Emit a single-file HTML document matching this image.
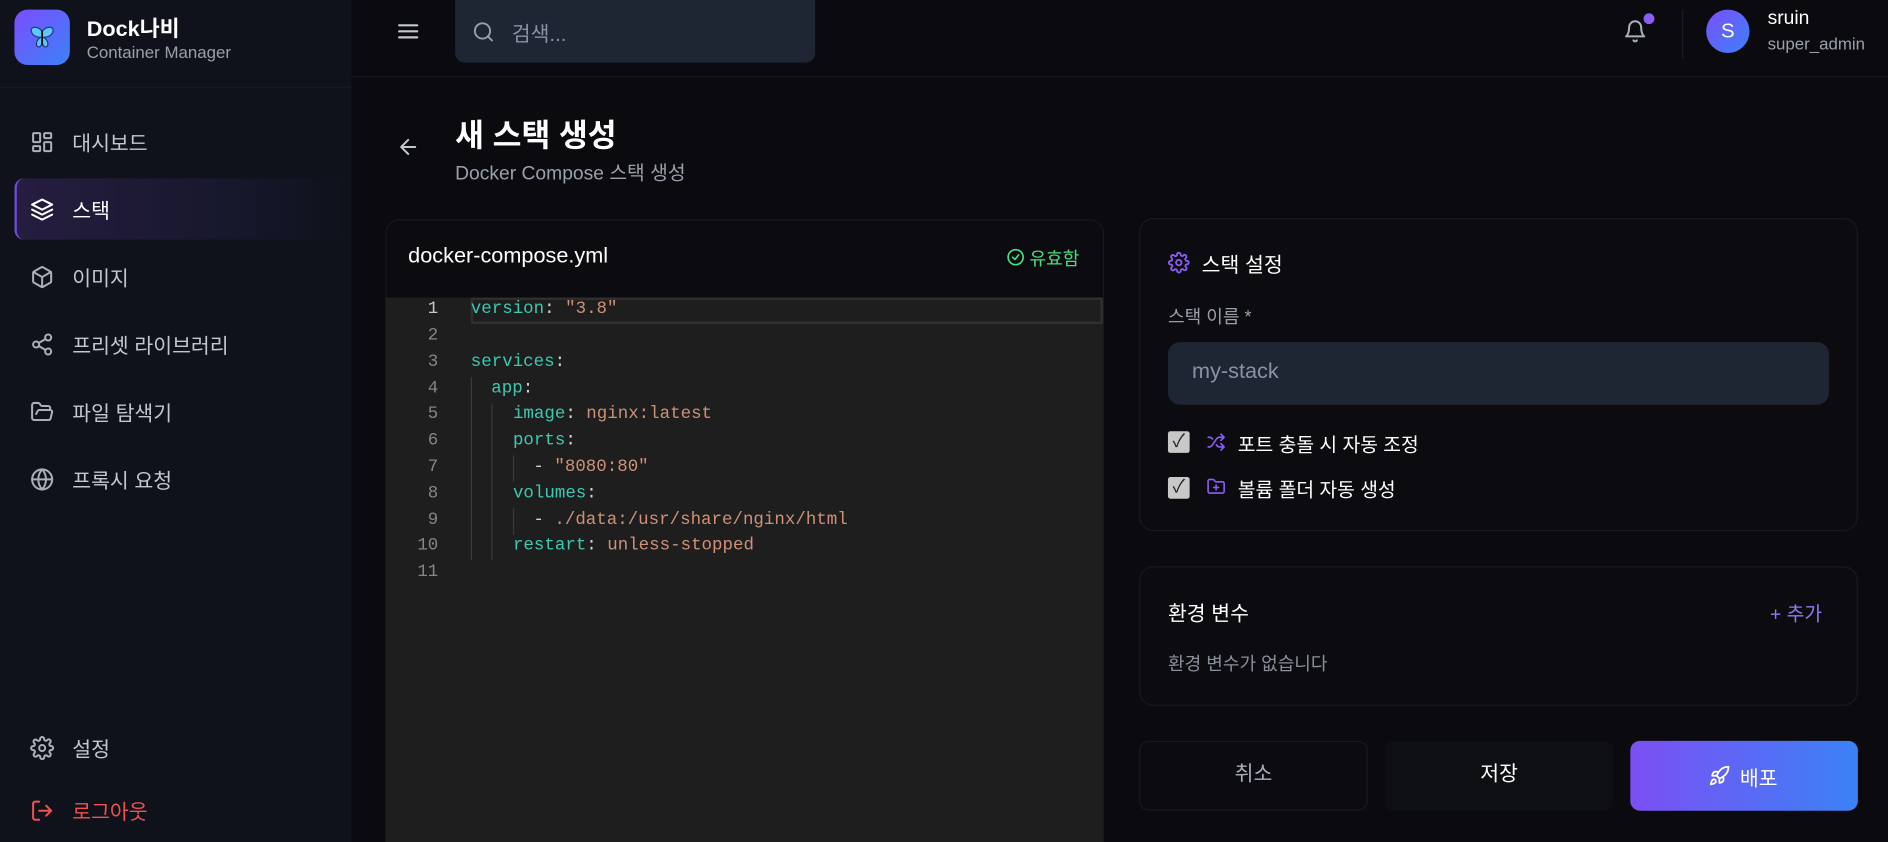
<!DOCTYPE html>
<html><head><meta charset="utf-8"><style>
*{box-sizing:border-box;margin:0;padding:0}
html,body{width:1888px;height:842px;overflow:hidden;background:#0b0b0f}
#o{position:relative;width:1888px;height:842px;overflow:hidden}
#w{position:absolute;left:0;top:0;width:1568px;height:699px;overflow:hidden;transform:scale(1.20408,1.2046);transform-origin:0 0;font-family:"Liberation Sans","Noto Sans CJK KR",sans-serif;color:#fff;background:#0b0b0f}
.a{position:absolute;white-space:nowrap}
svg{position:absolute;fill:none;stroke-linecap:round;stroke-linejoin:round}
.nav{font-size:17px;color:#c3c7cf}
.mono{font-family:"Liberation Mono","DejaVu Sans Mono",monospace;font-size:14.5px;color:#d4d4d4}
.k{color:#3dc9b0}.s{color:#ce9178}
.ln{position:absolute;width:42px;text-align:right;left:322px;font-family:"Liberation Mono",monospace;font-size:14.5px;color:#858585}
.card{position:absolute;border:1px solid #17191f;border-radius:12px;background:#0c0c10}
</style></head><body><div id="o"><div id="w">
<div class="a" style="left:0;top:0;width:292px;height:699px;background:#0f121a"></div>
<div class="a" style="left:0;top:72px;width:292px;height:1px;background:#161a23"></div>
<div class="a" style="left:12px;top:8px;width:46px;height:46px;border-radius:11px;background:linear-gradient(135deg,#7c4dff,#3b82f6)"></div>
<svg style="left:22px;top:18px" width="26" height="26" viewBox="0 0 26 26"><path d="M13 8 C9 3 3 4 4 8 C5 12 9 13 12 13 C8 15 7 20 10 21 C12 21 13 18 13 16 C13 18 14 21 16 21 C19 20 18 15 14 13 C17 13 21 12 22 8 C23 4 17 3 13 8Z" fill="#5ec8f5" stroke="#1e3a8a" stroke-width="1"/><path d="M13 8 V19" stroke="#111" stroke-width="1.5"/></svg>
<div class="a" style="left:72px;top:10px;font-size:18px;font-weight:bold">Dock나비</div>
<div class="a" style="left:72px;top:35px;font-size:14px;color:#9aa0ab">Container Manager</div>

<div class="a" style="left:12px;top:148px;width:278px;height:51px;border-radius:8px;border-left:2px solid #6d4bd6;background:linear-gradient(90deg,#261d40,#15172a 70%,rgba(15,18,26,0))"></div>
<svg style="left:25px;top:108px" width="20" height="20" viewBox="0 0 24 24" stroke="#aab0bb" stroke-width="2"><rect x="3" y="3" width="7" height="9" rx="1"/><rect x="14" y="3" width="7" height="5" rx="1"/><rect x="14" y="12" width="7" height="9" rx="1"/><rect x="3" y="16" width="7" height="5" rx="1"/></svg>
<div class="a nav" style="left:60px;top:105px">대시보드</div>
<svg style="left:25px;top:164px" width="20" height="20" viewBox="0 0 24 24" stroke="#fff" stroke-width="2"><path d="M12 2 2 7l10 5 10-5-10-5z"/><path d="M2 17l10 5 10-5"/><path d="M2 12l10 5 10-5"/></svg>
<div class="a nav" style="left:60px;top:161px;color:#fff">스택</div>
<svg style="left:25px;top:220px" width="20" height="20" viewBox="0 0 24 24" stroke="#aab0bb" stroke-width="2"><path d="M21 16V8a2 2 0 0 0-1-1.7l-7-4a2 2 0 0 0-2 0l-7 4A2 2 0 0 0 3 8v8a2 2 0 0 0 1 1.7l7 4a2 2 0 0 0 2 0l7-4A2 2 0 0 0 21 16z"/><path d="M3.3 7 12 12l8.7-5M12 22V12"/></svg>
<div class="a nav" style="left:60px;top:217px">이미지</div>
<svg style="left:25px;top:276px" width="20" height="20" viewBox="0 0 24 24" stroke="#aab0bb" stroke-width="2"><circle cx="18" cy="5" r="3"/><circle cx="6" cy="12" r="3"/><circle cx="18" cy="19" r="3"/><path d="m8.6 13.5 6.8 4M15.4 6.5l-6.8 4"/></svg>
<div class="a nav" style="left:60px;top:273px">프리셋 라이브러리</div>
<svg style="left:25px;top:332px" width="20" height="20" viewBox="0 0 24 24" stroke="#aab0bb" stroke-width="2"><path d="M6 14l1.5-2.9A2 2 0 0 1 9.2 10H20a2 2 0 0 1 1.9 2.5l-1.5 6A2 2 0 0 1 18.5 20H4a2 2 0 0 1-2-2V5a2 2 0 0 1 2-2h3.9a2 2 0 0 1 1.7.9l.8 1.2a2 2 0 0 0 1.7.9H18a2 2 0 0 1 2 2v2"/></svg>
<div class="a nav" style="left:60px;top:329px">파일 탐색기</div>
<svg style="left:25px;top:388px" width="20" height="20" viewBox="0 0 24 24" stroke="#aab0bb" stroke-width="2"><circle cx="12" cy="12" r="10"/><path d="M2 12h20M12 2a15 15 0 0 1 0 20 15 15 0 0 1 0-20"/></svg>
<div class="a nav" style="left:60px;top:385px">프록시 요청</div>
<svg style="left:25px;top:611px" width="20" height="20" viewBox="0 0 24 24" stroke="#aab0bb" stroke-width="2"><circle cx="12" cy="12" r="3"/><path d="M19.4 15a1.7 1.7 0 0 0 .3 1.8l.1.1a2 2 0 1 1-2.8 2.8l-.1-.1a1.7 1.7 0 0 0-1.8-.3 1.7 1.7 0 0 0-1 1.5V21a2 2 0 1 1-4 0v-.1a1.7 1.7 0 0 0-1.1-1.5 1.7 1.7 0 0 0-1.8.3l-.1.1a2 2 0 1 1-2.8-2.8l.1-.1a1.7 1.7 0 0 0 .3-1.8 1.7 1.7 0 0 0-1.5-1H3a2 2 0 1 1 0-4h.1a1.7 1.7 0 0 0 1.5-1.1 1.7 1.7 0 0 0-.3-1.8l-.1-.1a2 2 0 1 1 2.8-2.8l.1.1a1.7 1.7 0 0 0 1.8.3H9a1.7 1.7 0 0 0 1-1.5V3a2 2 0 1 1 4 0v.1a1.7 1.7 0 0 0 1 1.5 1.7 1.7 0 0 0 1.8-.3l.1-.1a2 2 0 1 1 2.8 2.8l-.1.1a1.7 1.7 0 0 0-.3 1.8V9a1.7 1.7 0 0 0 1.5 1H21a2 2 0 1 1 0 4h-.1a1.7 1.7 0 0 0-1.5 1z"/></svg>
<div class="a nav" style="left:60px;top:608px">설정</div>
<svg style="left:25px;top:663px" width="20" height="20" viewBox="0 0 24 24" stroke="#f05252" stroke-width="2"><path d="M9 21H5a2 2 0 0 1-2-2V5a2 2 0 0 1 2-2h4M16 17l5-5-5-5M21 12H9"/></svg>
<div class="a nav" style="left:60px;top:660px;color:#f05252">로그아웃</div>

<div class="a" style="left:292px;top:63px;width:1276px;height:1px;background:#14161c"></div>
<svg style="left:329px;top:16px" width="20" height="20" viewBox="0 0 24 24" stroke="#c3c7cf" stroke-width="2.2"><path d="M3 6h18M3 12h18M3 18h18"/></svg>
<div class="a" style="left:378px;top:0;width:299px;height:52px;border-radius:0 0 8px 8px;background:#1e2533"></div>
<svg style="left:392px;top:17px" width="19" height="19" viewBox="0 0 24 24" stroke="#9aa0ab" stroke-width="2"><circle cx="11" cy="11" r="8"/><path d="m21 21-4.3-4.3"/></svg>
<div class="a" style="left:425px;top:14px;font-size:17px;color:#8a93a3">검색...</div>
<svg style="left:1348px;top:16px" width="20" height="20" viewBox="0 0 24 24" stroke="#aab0bb" stroke-width="2"><path d="M6 8a6 6 0 0 1 12 0c0 7 3 9 3 9H3s3-2 3-9M10.3 21a1.9 1.9 0 0 0 3.4 0"/></svg>
<div class="a" style="left:1365px;top:11px;width:9px;height:9px;border-radius:50%;background:#8b5cf6"></div>
<div class="a" style="left:1397px;top:8px;width:1px;height:40px;background:#1a1c22"></div>
<div class="a" style="left:1417px;top:8px;width:36px;height:36px;border-radius:50%;background:linear-gradient(135deg,#7c4dff,#3b82f6);font-size:17px;text-align:center;line-height:36px">S</div>
<div class="a" style="left:1468px;top:7px;font-size:16px">sruin</div>
<div class="a" style="left:1468px;top:28px;font-size:14px;color:#9aa0ab">super_admin</div>

<svg style="left:329px;top:112px" width="20" height="20" viewBox="0 0 24 24" stroke="#c3c7cf" stroke-width="2"><path d="M19 12H5M12 19l-7-7 7-7"/></svg>
<div class="a" style="left:378px;top:92px;font-size:26px;font-weight:bold">새 스택 생성</div>
<div class="a" style="left:378px;top:130px;font-size:16px;color:#9aa0ab">Docker Compose 스택 생성</div>

<div class="card" style="left:320px;top:182px;width:597px;height:517px;border-bottom:none;border-radius:12px 12px 0 0"></div>
<div class="a" style="left:339px;top:202px;font-size:18px">docker-compose.yml</div>
<svg style="left:836px;top:206px" width="15" height="15" viewBox="0 0 24 24" stroke="#4ade80" stroke-width="2.2"><circle cx="12" cy="12" r="10"/><path d="m8 12 3 3 5-6"/></svg>
<div class="a" style="left:855px;top:204px;font-size:15px;color:#4ade80">유효함</div>
<div class="a" style="left:320px;top:247px;width:596px;height:452px;background:#1e1e1e"></div>
<div class="a" style="left:391px;top:247px;width:525px;height:22px;border:2px solid #303030"></div>
<div class="a" style="left:391px;top:313px;width:1px;height:152px;background:#3a3a3a"></div>
<div class="a" style="left:408px;top:335px;width:1px;height:130px;background:#3a3a3a"></div>
<div class="a" style="left:426px;top:378px;width:1px;height:22px;background:#3a3a3a"></div>
<div class="a" style="left:426px;top:422px;width:1px;height:22px;background:#3a3a3a"></div>
<div class="ln" style="top:249px;color:#c6c6c6">1</div>
<div class="ln" style="top:271px">2</div>
<div class="ln" style="top:293px">3</div>
<div class="ln" style="top:315px">4</div>
<div class="ln" style="top:336px">5</div>
<div class="ln" style="top:358px">6</div>
<div class="ln" style="top:380px">7</div>
<div class="ln" style="top:402px">8</div>
<div class="ln" style="top:424px">9</div>
<div class="ln" style="top:445px">10</div>
<div class="ln" style="top:467px">11</div>
<div class="a mono" style="left:391px;top:249px"><span class="k">version</span>: <span class="s">"3.8"</span></div>
<div class="a mono" style="left:391px;top:293px"><span class="k">services</span>:</div>
<div class="a mono" style="left:408px;top:315px"><span class="k">app</span>:</div>
<div class="a mono" style="left:426px;top:336px"><span class="k">image</span>: <span class="s">nginx:latest</span></div>
<div class="a mono" style="left:426px;top:358px"><span class="k">ports</span>:</div>
<div class="a mono" style="left:443px;top:380px">- <span class="s">"8080:80"</span></div>
<div class="a mono" style="left:426px;top:402px"><span class="k">volumes</span>:</div>
<div class="a mono" style="left:443px;top:424px">- <span class="s">./data:/usr/share/nginx/html</span></div>
<div class="a mono" style="left:426px;top:445px"><span class="k">restart</span>: <span class="s">unless-stopped</span></div>

<div class="card" style="left:946px;top:181px;width:597px;height:260px"></div>
<svg style="left:970px;top:209px" width="18" height="18" viewBox="0 0 24 24" stroke="#8b5cf6" stroke-width="2"><circle cx="12" cy="12" r="3"/><path d="M19.4 15a1.7 1.7 0 0 0 .3 1.8l.1.1a2 2 0 1 1-2.8 2.8l-.1-.1a1.7 1.7 0 0 0-1.8-.3 1.7 1.7 0 0 0-1 1.5V21a2 2 0 1 1-4 0v-.1a1.7 1.7 0 0 0-1.1-1.5 1.7 1.7 0 0 0-1.8.3l-.1.1a2 2 0 1 1-2.8-2.8l.1-.1a1.7 1.7 0 0 0 .3-1.8 1.7 1.7 0 0 0-1.5-1H3a2 2 0 1 1 0-4h.1a1.7 1.7 0 0 0 1.5-1.1 1.7 1.7 0 0 0-.3-1.8l-.1-.1a2 2 0 1 1 2.8-2.8l.1.1a1.7 1.7 0 0 0 1.8.3H9a1.7 1.7 0 0 0 1-1.5V3a2 2 0 1 1 4 0v.1a1.7 1.7 0 0 0 1 1.5 1.7 1.7 0 0 0 1.8-.3l.1-.1a2 2 0 1 1 2.8 2.8l-.1.1a1.7 1.7 0 0 0-.3 1.8V9a1.7 1.7 0 0 0 1.5 1H21a2 2 0 1 1 0 4h-.1a1.7 1.7 0 0 0-1.5 1z"/></svg>
<div class="a" style="left:998px;top:206px;font-size:17px">스택 설정</div>
<div class="a" style="left:970px;top:252px;font-size:15px;color:#9aa0ab">스택 이름 *</div>
<div class="a" style="left:970px;top:284px;width:549px;height:52px;border-radius:10px;background:#1e2533"></div>
<div class="a" style="left:990px;top:298px;font-size:18px;color:#8a93a3">my-stack</div>
<div class="a" style="left:970px;top:358px;width:18px;height:18px;border-radius:2px;background:#c8c8c8;color:#222;font-size:15px;line-height:18px;text-align:center">✓</div>
<svg style="left:1002px;top:359px" width="16" height="16" viewBox="0 0 24 24" stroke="#8b5cf6" stroke-width="2"><path d="M2 18h1.4c1.3 0 2.5-.6 3.3-1.7l6.1-8.6c.7-1.1 2-1.7 3.3-1.7H22M18 2l4 4-4 4M2 6h1.9c1.5 0 2.9.9 3.6 2.2M22 18h-5.9c-1.3 0-2.6-.7-3.3-1.8l-.5-.8M18 14l4 4-4 4"/></svg>
<div class="a" style="left:1028px;top:356px;font-size:16px">포트 충돌 시 자동 조정</div>
<div class="a" style="left:970px;top:396px;width:18px;height:18px;border-radius:2px;background:#c8c8c8;color:#222;font-size:15px;line-height:18px;text-align:center">✓</div>
<svg style="left:1002px;top:396px" width="16" height="16" viewBox="0 0 24 24" stroke="#8b5cf6" stroke-width="2"><path d="M12 10v6M9 13h6M20 20a2 2 0 0 0 2-2V8a2 2 0 0 0-2-2h-7.9a2 2 0 0 1-1.7-.9l-.8-1.2A2 2 0 0 0 7.9 3H4a2 2 0 0 0-2 2v13a2 2 0 0 0 2 2z"/></svg>
<div class="a" style="left:1028px;top:393px;font-size:16px">볼륨 폴더 자동 생성</div>

<div class="card" style="left:946px;top:470px;width:597px;height:116px"></div>
<div class="a" style="left:970px;top:495px;font-size:17px">환경 변수</div>
<div class="a" style="left:1470px;top:496px;font-size:16px;color:#8b7cf6">+ 추가</div>
<div class="a" style="left:970px;top:540px;font-size:15px;color:#8a8f99">환경 변수가 없습니다</div>

<div class="a" style="left:946px;top:615px;width:190px;height:58px;border:1px solid #17191f;border-radius:8px;background:#0c0c10;font-size:17px;color:#aab0bb;text-align:center;line-height:54px">취소</div>
<div class="a" style="left:1150px;top:615px;width:190px;height:58px;border-radius:8px;background:#0e0f13;font-size:17px;text-align:center;line-height:56px">저장</div>
<div class="a" style="left:1354px;top:615px;width:189px;height:58px;border-radius:8px;background:linear-gradient(90deg,#7c4ff3,#3b82f6)"></div>
<svg style="left:1419px;top:635px" width="18" height="18" viewBox="0 0 24 24" stroke="#fff" stroke-width="2"><path d="M4.5 16.5c-1.5 1.3-2 5-2 5s3.7-.5 5-2c.7-.8.7-2.1-.1-2.9a2.2 2.2 0 0 0-2.9-.1zM12 15l-3-3a22 22 0 0 1 2-3.9A12.9 12.9 0 0 1 22 2c0 2.7-.8 7.5-6 11a22.4 22.4 0 0 1-4 2z"/><path d="M9 12H4s.6-3 2-4c1.6-1.1 5 0 5 0M12 15v5s3-.6 4-2c1.1-1.6 0-5 0-5"/></svg>
<div class="a" style="left:1445px;top:632px;font-size:17px">배포</div>
</div></div></body></html>
